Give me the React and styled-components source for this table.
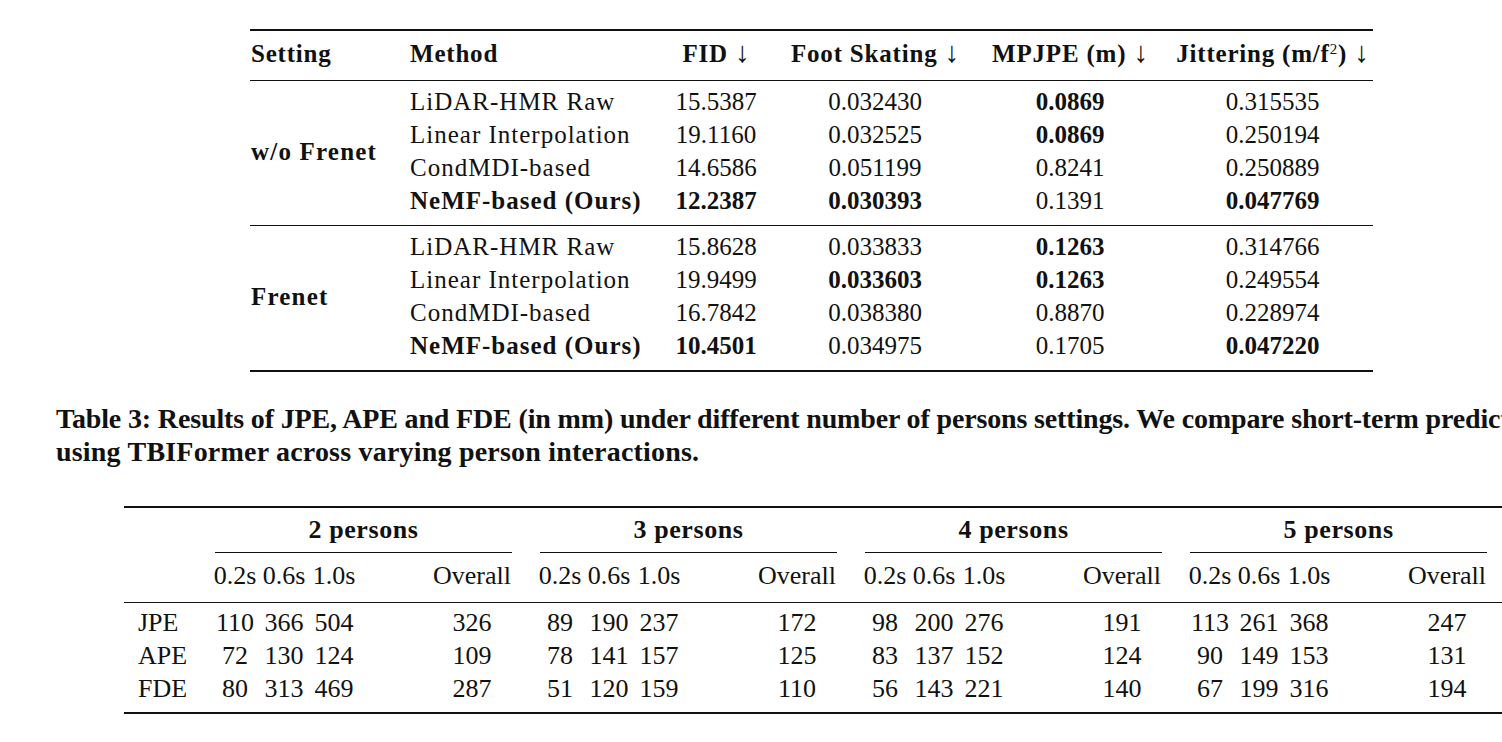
import styled, { createGlobalStyle } from 'styled-components';

const GlobalStyle = createGlobalStyle`
  html, body {
    margin: 0;
    padding: 0;
    background: #fff;
    overflow: hidden;
  }
  body {
    font-family: 'Liberation Serif', 'Times New Roman', serif;
    color: #111;
  }
`;

const Page = styled.div`
  width: 1502px;
  height: 742px;
  overflow: hidden;
  box-sizing: border-box;
  padding-top: 29px;
  display: flex;
  flex-direction: column;
  align-items: flex-start;
`;

/* ---------- table 1: Frenet ablation ---------- */

const MetricsTable = styled.table`
  margin-left: 250px;
  width: 1123px;
  flex-shrink: 0;
  table-layout: fixed;
  border-collapse: collapse;
  font-size: 25px;
  border-top: 2px solid #111;
  border-bottom: 2px solid #111;
`;

const Group = styled.tbody`
  border-top: 1px solid #111;
`;

const HeadCell = styled.th`
  height: 46px;
  padding: 0 0 3px ${(p) => p.$indent || 0}px;
  text-align: ${(p) => (p.$left ? 'left' : 'center')};
  vertical-align: middle;
  font-weight: 700;
  letter-spacing: 0.8px;
  white-space: nowrap;
`;

const Arrow = styled.span`
  font-size: 29px;
  line-height: 0;
  font-weight: 400;
  letter-spacing: 0;
`;

const Sup = styled.sup`
  font-size: 15px;
  font-weight: 400;
  vertical-align: 8px;
  line-height: 0;
`;

const SettingCell = styled.td`
  padding: 5px 0 7px 1px;
  vertical-align: middle;
  font-weight: 700;
  letter-spacing: 1.2px;
  white-space: nowrap;
`;

const MethodCell = styled.td`
  height: 33px;
  line-height: 33px;
  padding: ${(p) => (p.$first ? 4 : 0)}px 0 ${(p) => (p.$last ? 8 : 0)}px 12px;
  font-weight: ${(p) => (p.$bold ? 700 : 400)};
  letter-spacing: 1px;
  white-space: nowrap;
`;

const ValueCell = styled.td`
  height: 33px;
  line-height: 33px;
  padding: ${(p) => (p.$first ? 4 : 0)}px 0 ${(p) => (p.$last ? 8 : 0)}px ${(p) => p.$indent || 0}px;
  text-align: center;
  font-weight: ${(p) => (p.$bold ? 700 : 400)};
  white-space: nowrap;
`;

/* ---------- caption ---------- */

const Caption = styled.div`
  margin: 30px 0 0 56px;
  font-size: 28px;
  line-height: 33px;
  font-weight: 700;
  white-space: nowrap;
`;

const CaptionLine = styled.span`
  display: block;
  letter-spacing: ${(p) => p.$tracking || 0}px;
`;

/* ---------- table 2: persons ---------- */

const PersonsTable = styled.table`
  margin: 38px 0 0 124px;
  width: 1387px;
  flex-shrink: 0;
  table-layout: fixed;
  border-collapse: collapse;
  font-size: 26px;
  border-top: 2px solid #111;
  border-bottom: 2px solid #111;
`;

const PersonsHead = styled.thead`
  border-bottom: 1px solid #111;
`;

const GroupHead = styled.th`
  height: 45px;
  padding: 0 24px 0 4px;
  vertical-align: top;
  font-weight: 700;
  letter-spacing: 0.6px;
`;

const CMidRule = styled.div`
  height: 44px;
  line-height: 44px;
  border-bottom: 1px solid #111;
  text-align: center;
  white-space: nowrap;
`;

const SubHead = styled.th`
  height: 46px;
  padding: ${(p) => (p.$overall ? '0 23px 3px 72px' : '0 0 3px 0')};
  text-align: center;
  font-weight: 400;
  white-space: nowrap;
`;

const LabelCell = styled.td`
  height: 33px;
  line-height: 33px;
  padding: ${(p) => (p.$first ? 3 : 0)}px 0 ${(p) => (p.$last ? 7 : 0)}px 14px;
`;

const NumCell = styled.td`
  height: 33px;
  line-height: 33px;
  padding: ${(p) => (p.$first ? 3 : 0)}px ${(p) => (p.$overall ? 23 : 0)}px
    ${(p) => (p.$last ? 7 : 0)}px ${(p) => (p.$overall ? 72 : 0)}px;
  text-align: center;
`;

const b = (v) => ({ v, b: true });

const frenetGroups = [
  {
    setting: 'w/o Frenet',
    rows: [
      ['LiDAR-HMR Raw', '15.5387', '0.032430', b('0.0869'), '0.315535'],
      ['Linear Interpolation', '19.1160', '0.032525', b('0.0869'), '0.250194'],
      ['CondMDI-based', '14.6586', '0.051199', '0.8241', '0.250889'],
      [b('NeMF-based (Ours)'), b('12.2387'), b('0.030393'), '0.1391', b('0.047769')],
    ],
  },
  {
    setting: 'Frenet',
    rows: [
      ['LiDAR-HMR Raw', '15.8628', '0.033833', b('0.1263'), '0.314766'],
      ['Linear Interpolation', '19.9499', b('0.033603'), b('0.1263'), '0.249554'],
      ['CondMDI-based', '16.7842', '0.038380', '0.8870', '0.228974'],
      [b('NeMF-based (Ours)'), b('10.4501'), '0.034975', '0.1705', b('0.047220')],
    ],
  },
];

const personsGroups = ['2 persons', '3 persons', '4 persons', '5 persons'];
const horizons = ['0.2s', '0.6s', '1.0s', 'Overall'];

const personsRows = [
  ['JPE', [110, 366, 504, 326, 89, 190, 237, 172, 98, 200, 276, 191, 113, 261, 368, 247]],
  ['APE', [72, 130, 124, 109, 78, 141, 157, 125, 83, 137, 152, 124, 90, 149, 153, 131]],
  ['FDE', [80, 313, 469, 287, 51, 120, 159, 110, 56, 143, 221, 140, 67, 199, 316, 194]],
];

const cell = (c) => (typeof c === 'string' ? { v: c, b: false } : c);

function FrenetTable() {
  return (
    <MetricsTable>
      <colgroup>
        <col style={{ width: 148 }} />
        <col style={{ width: 266 }} />
        <col style={{ width: 104 }} />
        <col style={{ width: 214 }} />
        <col style={{ width: 176 }} />
        <col style={{ width: 215 }} />
      </colgroup>
      <thead>
        <tr>
          <HeadCell $left $indent={1}>Setting</HeadCell>
          <HeadCell $left $indent={12}>Method</HeadCell>
          <HeadCell>FID <Arrow>↓</Arrow></HeadCell>
          <HeadCell>Foot Skating <Arrow>↓</Arrow></HeadCell>
          <HeadCell>MPJPE (m) <Arrow>↓</Arrow></HeadCell>
          <HeadCell $indent={14}>
            Jittering (m/f<Sup>2</Sup>) <Arrow>↓</Arrow>
          </HeadCell>
        </tr>
      </thead>
      {frenetGroups.map((g) => (
        <Group key={g.setting}>
          {g.rows.map((row, i) => {
            const [method, ...vals] = row.map(cell);
            const first = i === 0;
            const last = i === g.rows.length - 1;
            return (
              <tr key={i}>
                {first && <SettingCell rowSpan={g.rows.length}>{g.setting}</SettingCell>}
                <MethodCell $first={first} $last={last} $bold={method.b}>
                  {method.v}
                </MethodCell>
                {vals.map((c, j) => (
                  <ValueCell key={j} $first={first} $last={last} $bold={c.b} $indent={j === 3 ? 14 : 0}>
                    {c.v}
                  </ValueCell>
                ))}
              </tr>
            );
          })}
        </Group>
      ))}
    </MetricsTable>
  );
}

function PersonsTableView() {
  return (
    <PersonsTable>
      <colgroup>
        <col style={{ width: 87 }} />
        {personsGroups.map((g) =>
          [48, 50, 50, 177].map((w, i) => <col key={g + i} style={{ width: w }} />)
        )}
      </colgroup>
      <PersonsHead>
        <tr>
          <th />
          {personsGroups.map((g) => (
            <GroupHead key={g} colSpan={4}>
              <CMidRule>{g}</CMidRule>
            </GroupHead>
          ))}
        </tr>
        <tr>
          <th />
          {personsGroups.map((g) =>
            horizons.map((h) => (
              <SubHead key={g + h} $overall={h === 'Overall'}>
                {h}
              </SubHead>
            ))
          )}
        </tr>
      </PersonsHead>
      <tbody>
        {personsRows.map(([label, vals], i) => {
          const first = i === 0;
          const last = i === personsRows.length - 1;
          return (
            <tr key={label}>
              <LabelCell $first={first} $last={last}>{label}</LabelCell>
              {vals.map((v, j) => (
                <NumCell key={j} $first={first} $last={last} $overall={j % 4 === 3}>
                  {v}
                </NumCell>
              ))}
            </tr>
          );
        })}
      </tbody>
    </PersonsTable>
  );
}

export default function App() {
  return (
    <>
      <GlobalStyle />
      <Page>
        <FrenetTable />
        <Caption>
          <CaptionLine $tracking={-0.15}>
            Table 3: Results of JPE, APE and FDE (in mm) under different number of persons settings. We compare short-term predictions
          </CaptionLine>
          <CaptionLine $tracking={0.2}>using TBIFormer across varying person interactions.</CaptionLine>
        </Caption>
        <PersonsTableView />
      </Page>
    </>
  );
}
